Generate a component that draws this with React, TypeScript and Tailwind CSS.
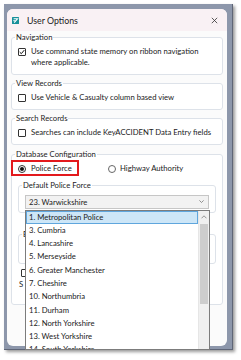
import React from 'react'

const forces = [
  '1. Metropolitan Police',
  '3. Cumbria',
  '4. Lancashire',
  '5. Merseyside',
  '6. Greater Manchester',
  '7. Cheshire',
  '10. Northumbria',
  '11. Durham',
  '12. North Yorkshire',
  '13. West Yorkshire',
  '14. South Yorkshire',
]

const Check = ({ checked }: { checked?: boolean }) => (
  <span className="w-[8px] h-[8px] mt-[1.5px] border border-[#333] rounded-[1px] bg-white shrink-0 flex items-center justify-center">
    {checked && (
      <svg width="6" height="6" viewBox="0 0 6 6">
        <path d="M0.7 3.1 L2.3 4.7 L5.3 1.1" fill="none" stroke="#111" strokeWidth="1" />
      </svg>
    )}
  </span>
)

const Radio = ({ on }: { on?: boolean }) => (
  <span
    className={
      on
        ? 'w-[8px] h-[8px] rounded-full border border-[#333] bg-white shrink-0 flex items-center justify-center'
        : 'w-[8px] h-[8px] rounded-full border border-[#666] bg-white shrink-0'
    }
  >
    {on && <span className="w-[4px] h-[4px] rounded-full bg-[#111]" />}
  </span>
)

const Legend = ({ children }: { children: React.ReactNode }) => (
  <legend className="-ml-[3px] px-[1px] leading-[11px]">{children}</legend>
)

const ForceList = () => (
  <div className="absolute left-0 top-full mt-[1px] w-[185px] h-[140px] bg-white border border-[#7c7c7c] flex overflow-hidden z-10">
    <div className="flex-1 flex flex-col">
      {forces.map((f, i) => (
        <div
          key={f}
          className={
            i === 0
              ? 'h-[13.3px] shrink-0 leading-[11.3px] pl-[2px] bg-[#cde6f7] border border-[#5fa6dd]'
              : 'h-[13.3px] shrink-0 leading-[13.3px] pl-[3px]'
          }
        >
          {f}
        </div>
      ))}
    </div>
    <div className="w-[11px] flex flex-col bg-[#f0f0f0] border-l border-[#e6e6e6]">
      <div className="h-[13px] shrink-0 flex items-center justify-center">
        <svg width="6" height="4" viewBox="0 0 6 4">
          <path d="M0.5 3.3 L3 0.8 L5.5 3.3" fill="none" stroke="#8a8a8a" strokeWidth="0.9" />
        </svg>
      </div>
      <div className="h-[80px] shrink-0 bg-[#cdcdcd] mx-[1px]" />
    </div>
  </div>
)

export default function App() {
  return (
    <div className="w-[241px] h-[360px] bg-white overflow-hidden pt-[4px] pl-[4px] font-['Lato',sans-serif] text-[7.7px] text-[#1b1b1b]">
      <div className="w-[229px] h-[346px] bg-[#8d97ab] pt-[5px] pl-[3px] pr-[5px] pb-[3px] shadow-[2px_2px_3px_rgba(0,0,0,0.4)] border-r border-b border-[#5f6677]">
        <div className="h-full bg-[#fbfbfb] rounded-[6px] flex flex-col">
          {/* title bar */}
          <div className="h-[22px] shrink-0 bg-[#f9f1f4] rounded-t-[6px] flex items-center pl-[5px] pr-[9px]">
            <svg width="7" height="7" viewBox="0 0 7 7" className="shrink-0">
              <rect width="7" height="7" rx="0.6" fill="#17909a" />
              <path d="M1.6 1.8 H5.5 L2.2 5.6" fill="none" stroke="#fff" strokeWidth="1.1" />
              <path d="M1.2 3.7 H3.3" fill="none" stroke="#fff" strokeWidth="0.9" />
            </svg>
            <span className="ml-[8px] text-[8.8px] leading-[11px] text-[#222] flex-1">User Options</span>
            <svg width="7" height="7" viewBox="0 0 7 7">
              <path d="M0.8 0.8 L6.2 6.2 M6.2 0.8 L0.8 6.2" stroke="#333" strokeWidth="0.8" />
            </svg>
          </div>

          <div className="px-[4px] flex flex-col">
            <fieldset className="mt-[1px] border border-[#dde2e9] rounded-[3px] px-[6px] pt-[3px] pb-[6px] bg-white">
              <Legend>Navigation</Legend>
              <div className="flex items-start gap-[5px] leading-[11px]">
                <Check checked />
                <span className="whitespace-nowrap">
                  Use command state memory on ribbon navigation
                  <br />
                  where applicable.
                </span>
              </div>
            </fieldset>

            <fieldset className="mt-[3px] border border-[#dde2e9] rounded-[3px] px-[6px] pt-[3px] pb-[6px] bg-white">
              <Legend>View Records</Legend>
              <div className="flex items-start gap-[5px] leading-[11px]">
                <Check />
                <span className="whitespace-nowrap">Use Vehicle &amp; Casualty column based view</span>
              </div>
            </fieldset>

            <fieldset className="mt-[3px] border border-[#dde2e9] rounded-[3px] px-[6px] pt-[3px] pb-[6px] bg-white">
              <Legend>Search Records</Legend>
              <div className="flex items-start gap-[5px] leading-[11px]">
                <Check />
                <span className="whitespace-nowrap">Searches can include KeyACCIDENT Data Entry fields</span>
              </div>
            </fieldset>

            <fieldset className="mt-[4px] border border-[#dde2e9] rounded-[3px] px-[6px] pt-[3px] pb-[14px] bg-white">
              <Legend>Database Configuration</Legend>
              <div className="flex items-center h-[11px] leading-[11px]">
                <span className="relative w-[90px] shrink-0 flex items-center gap-[5px]">
                  <Radio on />
                  <span>Police Force</span>
                  <span className="absolute -left-[7px] -top-[3px] w-[68px] h-[16px] border-2 border-[#e3191d]" />
                </span>
                <span className="flex items-center gap-[4px]">
                  <Radio />
                  <span>Highway Authority</span>
                </span>
              </div>

              <fieldset className="mt-[6px] border border-[#dde2e9] rounded-[3px] px-[6px] pt-[3.5px] pb-[3.5px]">
                <Legend>Default Police Force</Legend>
                <div className="relative">
                  <div className="h-[14px] border border-[#c6c6c6] bg-[#f2f2f2] flex items-center justify-between pl-[3px] pr-[4px]">
                    <span className="leading-[12px]">23. Warwickshire</span>
                    <svg width="5" height="3" viewBox="0 0 5 3">
                      <path d="M0.4 0.4 L2.5 2.5 L4.6 0.4" fill="none" stroke="#777" strokeWidth="0.8" />
                    </svg>
                  </div>
                  <ForceList />
                </div>
              </fieldset>

              <fieldset className="mt-[16px] border border-[#dde2e9] rounded-[3px] px-[6px] pt-[3px] pb-[3px]">
                <Legend>E</Legend>
                <div className="h-[17px]" />
              </fieldset>

              <div className="mt-[3.5px] ml-[3px] flex items-start leading-[11px]">
                <Check />
              </div>
              <div className="mt-[2px] ml-[1px] leading-[11px]">S</div>
            </fieldset>
          </div>
        </div>
      </div>
    </div>
  )
}
